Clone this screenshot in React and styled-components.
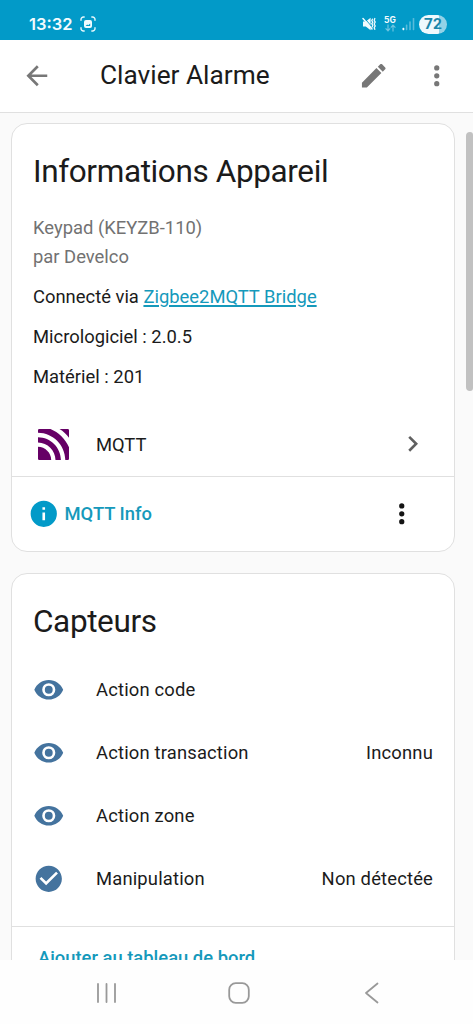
import React from "react";
import styled, { createGlobalStyle } from "styled-components";

const GlobalStyle = createGlobalStyle`
  * { box-sizing: border-box; }
  body { margin: 0; background: #fafafa; }
`;

const Screen = styled.div`
  display: flex;
  flex-direction: column;
  width: 473px;
  height: 1024px;
  overflow: hidden;
  background: #fafafa;
  color: #1b1b1b;
  font-family: Roboto, "Liberation Sans", sans-serif;
  font-size: 18.4px;
`;

const StatusBar = styled.header`
  display: flex;
  flex: none;
  align-items: center;
  height: 40px;
  padding: 8px 26px 0 29px;
  background: #029ac8;
  color: #f2fbfe;
`;

const Clock = styled.span`
  width: 51px;
  font-family: Inter, sans-serif;
  font-size: 16.5px;
  font-weight: 600;
  line-height: 20px;
`;

const StatusIcons = styled.div`
  display: flex;
  align-items: center;
  margin-left: auto;
`;

const Network = styled.div`
  display: flex;
  flex-direction: column;
  align-items: center;
  width: 12px;
  margin: 0 6px 0 8px;
  font-family: Inter, sans-serif;
  font-size: 8.5px;
  font-weight: 700;
  line-height: 8px;
`;

const Battery = styled.span`
  width: 28px;
  height: 19px;
  margin-left: 4px;
  border-radius: 10px;
  background: linear-gradient(90deg, #eef9fd 72%, #93d2e7 72%);
  color: #1a87ab;
  font-family: Roboto, sans-serif;
  font-size: 15.5px;
  font-weight: 700;
  line-height: 19px;
  text-align: center;
`;

const AppBar = styled.div`
  display: flex;
  flex: none;
  align-items: center;
  height: 73px;
  padding: 0 21px 0 21px;
  border-bottom: 1px solid #e0e0e0;
  background: #fff;
`;

const AppTitle = styled.h1`
  flex: 1;
  margin: -2px 0 0 47.5px;
  font-size: 26.25px;
  font-weight: 400;
  line-height: 32px;
`;

const Content = styled.main`
  display: flex;
  flex: 1;
  min-height: 0;
  justify-content: space-between;
  overflow: hidden;
`;

const Cards = styled.div`
  display: flex;
  flex-direction: column;
  gap: 21px;
  width: 444px;
  margin: 10px 0 0 11px;
`;

const ScrollThumb = styled.div`
  width: 7px;
  height: 259px;
  margin-top: 19px;
  border-radius: 4px 3px 3px 4px;
  background: #c1c1c1;
`;

const Card = styled.section`
  flex: none;
  height: ${(p) => p.$height}px;
  border: 1.4px solid #e0e0e0;
  border-radius: 16px;
  background: #fff;
`;

const CardTitle = styled.h2`
  margin: 0;
  padding: 28px 21px 0;
  font-size: 31.5px;
  font-weight: 400;
  line-height: 40px;
  letter-spacing: -0.38px;
`;

const Model = styled.div`
  margin: 21px 21px 0;
  color: #727272;
  line-height: 29px;
`;

const Detail = styled.div`
  margin: 11px 21px 0;
  line-height: 29px;
`;

const Link = styled.a`
  color: #1599bb;
  text-decoration: underline;
  text-decoration-thickness: 1.5px;
  text-underline-offset: 2px;
`;

const Row = styled.div`
  display: flex;
  align-items: center;
  height: 63px;
  padding: 0 21px;
  letter-spacing: 0.17px;
`;

const RowIcon = styled.span`
  display: flex;
  width: 63px;
`;

const RowLabel = styled.span`
  flex: 1;
`;

const IntegrationRow = styled(Row)`
  height: 64px;
  margin-top: 21px;
  padding: 0 26px 0 26px;
  letter-spacing: 0;
`;

const IntegrationIcon = styled(RowIcon)`
  width: 58px;
  padding-top: 1px;
`;

const Actions = styled.div`
  display: flex;
  align-items: center;
  height: 74px;
  padding: 0 37px 0 15.5px;
  border-top: 1.4px solid #e0e0e0;
`;

const ActionLabel = styled.span`
  flex: 1;
  margin-left: 5.5px;
  color: #1599bb;
  font-weight: 500;
`;

const Rows = styled.div`
  margin-top: 16px;
`;

const AddLink = styled.div`
  margin-top: 16px;
  padding: 17px 26px 0 26px;
  border-top: 1.4px solid #e0e0e0;
  color: #1599bb;
  font-weight: 500;
  line-height: 28px;
`;

const NavBar = styled.nav`
  display: flex;
  flex: none;
  align-items: center;
  justify-content: space-between;
  height: 64px;
  padding: 1px 93px 0 95px;
  background: #fefefe;
`;

const PATHS = {
  back: "M20,11V13H8L13.5,18.5L12.08,19.92L4.16,12L12.08,4.08L13.5,5.5L8,11H20Z",
  pencil:
    "M20.71,7.04C21.1,6.65 21.1,6 20.71,5.63L18.37,3.29C18,2.9 17.35,2.9 16.96,3.29L15.12,5.12L18.87,8.87M3,17.25V21H6.75L17.81,9.93L14.06,6.18L3,17.25Z",
  dots: "M12,16A2,2 0 0,1 14,18A2,2 0 0,1 12,20A2,2 0 0,1 10,18A2,2 0 0,1 12,16M12,10A2,2 0 0,1 14,12A2,2 0 0,1 12,14A2,2 0 0,1 10,12A2,2 0 0,1 12,10M12,4A2,2 0 0,1 14,6A2,2 0 0,1 12,8A2,2 0 0,1 10,6A2,2 0 0,1 12,4Z",
  chevron: "M8.59,16.58L13.17,12L8.59,7.41L10,6L16,12L10,18L8.59,16.58Z",
  info: "M13,9H11V7H13M13,17H11V11H13M12,2A10,10 0 0,0 2,12A10,10 0 0,0 12,22A10,10 0 0,0 22,12A10,10 0 0,0 12,2Z",
  eye: "M12,9A3,3 0 0,0 9,12A3,3 0 0,0 12,15A3,3 0 0,0 15,12A3,3 0 0,0 12,9M12,17A5,5 0 0,1 7,12A5,5 0 0,1 12,7A5,5 0 0,1 17,12A5,5 0 0,1 12,17M12,4.5C7,4.5 2.73,7.61 1,12C2.73,16.39 7,19.5 12,19.5C17,19.5 21.27,16.39 23,12C21.27,7.61 17,4.5 12,4.5Z",
  check:
    "M12 2C6.5 2 2 6.5 2 12S6.5 22 12 22 22 17.5 22 12 17.5 2 12 2M10 17L5 12L6.41 10.59L10 14.17L17.59 6.58L19 8L10 17Z",
};

const IconSvg = styled.svg`
  display: block;
  flex: none;
  fill: ${(p) => p.$color};
`;

const Icon = ({ name, color, size = 31.5 }) => (
  <IconSvg $color={color} width={size} height={size} viewBox="0 0 24 24">
    <path d={PATHS[name]} />
  </IconSvg>
);

const EditIcon = styled.span`
  margin-right: 31.5px;
`;

const ScreenshotIcon = () => (
  <svg width="16" height="16" viewBox="0 0 16 16" fill="none" stroke="#e6f7fc" strokeWidth="1.4" strokeLinecap="round">
    <path d="M1 4.2V3.4A2.4 2.4 0 0 1 3.4 1H4.2M11.8 1H12.6A2.4 2.4 0 0 1 15 3.4V4.2M15 11.8V12.6A2.4 2.4 0 0 1 12.6 15H11.8M4.2 15H3.4A2.4 2.4 0 0 1 1 12.6V11.8" />
    <rect x="4" y="4" width="8" height="8" rx="2" fill="#f2fbfe" stroke="none" />
    <path d="M5.6 10L7.2 8.4L8.2 9.2L10.2 7.4V10Z" fill="#029ac8" stroke="none" />
  </svg>
);

const MuteIcon = () => (
  <svg width="14" height="14" viewBox="0 0 14 14" fill="none" stroke="#f2fbfe" strokeLinecap="round">
    <path d="M1 4.5H3.8L8.6 .8V13.2L3.8 9.5H1Z" fill="#f2fbfe" stroke="none" />
    <path d="M2.2 1L11 11" stroke="#029ac8" strokeWidth="1" />
    <path d="M1 1.6L10 12" strokeWidth="1.5" />
    <path d="M10.4 2.2L9.8 3.7L10.8 5.2L9.8 6.8L10.8 8.4L10.1 10M12.8 1.5L12.2 3.3L13.2 5.1L12.2 7L13.2 8.9L12.2 10.7L12.8 12.3" strokeWidth="1.3" />
  </svg>
);

const DataArrows = () => (
  <svg width="11" height="8" viewBox="0 0 11 8" fill="none" stroke="#6cc4e0" strokeWidth="1.2">
    <path d="M3 .5V6.8M.6 4.4L3 6.8L5.2 4.4M8 7.5V1.2M5.8 3.6L8 1.2L10.4 3.6" />
  </svg>
);

const SignalIcon = () => (
  <svg width="13" height="14" viewBox="0 0 13 14" fill="#58bbdb">
    <rect x="0.5" y="10.8" width="1.8" height="2.4" rx=".6" fill="#f2fbfe" />
    <rect x="3.8" y="7.5" width="1.6" height="5.7" rx=".6" />
    <rect x="7.2" y="4.3" width="1.6" height="8.9" rx=".6" />
    <rect x="10.7" y="1" width="1.6" height="12.2" rx=".6" />
  </svg>
);

const MqttLogo = () => (
  <svg width="31" height="31" viewBox="0 0 31 31" fill="#660066">
    <path d="M0 17.8C7.2 17.9 13 23.7 13.2 31H1.2Q0 31 0 29.8Z" />
    <path d="M0 8.3C12.6 8.4 22.7 18.5 22.9 31H17.5C17.3 21.5 9.6 13.8 0 13.6Z" />
    <path d="M0 1.2Q0 0 1.2 0H12.5C20.5 3.3 27.5 10 31 18.3V29.8Q31 31 29.8 31H27.3C27.1 16 15 3.9 0 3.7Z" />
    <path d="M21.5 0H29.8Q31 0 31 1.2V8.8C28.5 5.3 25.3 2.3 21.5 0Z" />
  </svg>
);

const RecentsIcon = () => (
  <svg width="22" height="22" viewBox="0 0 22 22" stroke="#999" strokeWidth="1.8" strokeLinecap="round">
    <path d="M3 2V20M11.5 2V20M20 2V20" />
  </svg>
);

const HomeButton = styled.span`
  display: flex;
  margin-right: 4px;
`;

const HomeIcon = () => (
  <svg width="22" height="22" viewBox="0 0 22 22" fill="none" stroke="#999" strokeWidth="1.8">
    <rect x="1.2" y="1.2" width="19.6" height="19.6" rx="6.5" />
  </svg>
);

const NavBackIcon = () => (
  <svg width="16" height="22" viewBox="0 0 16 22" fill="none" stroke="#999" strokeWidth="1.8" strokeLinecap="round" strokeLinejoin="round">
    <path d="M13.5 1.5L2 11L13.5 20.5" />
  </svg>
);

const SENSORS = [
  { icon: "eye", label: "Action code", value: "" },
  { icon: "eye", label: "Action transaction", value: "Inconnu" },
  { icon: "eye", label: "Action zone", value: "" },
  { icon: "check", label: "Manipulation", value: "Non détectée" },
];

export default function App() {
  return (
    <Screen>
      <GlobalStyle />
      <StatusBar>
        <Clock>13:32</Clock>
        <ScreenshotIcon />
        <StatusIcons>
          <MuteIcon />
          <Network>
            5G
            <DataArrows />
          </Network>
          <SignalIcon />
          <Battery>72</Battery>
        </StatusIcons>
      </StatusBar>
      <AppBar>
        <Icon name="back" color="#777" />
        <AppTitle>Clavier Alarme</AppTitle>
        <EditIcon>
          <Icon name="pencil" color="#777" />
        </EditIcon>
        <Icon name="dots" color="#777" />
      </AppBar>
      <Content>
        <Cards>
          <Card $height={429}>
            <CardTitle>Informations Appareil</CardTitle>
            <Model>
              Keypad (KEYZB-110)
              <br />
              par Develco
            </Model>
            <Detail>
              Connecté via <Link>Zigbee2MQTT Bridge</Link>
            </Detail>
            <Detail>Micrologiciel : 2.0.5</Detail>
            <Detail>Matériel : 201</Detail>
            <IntegrationRow>
              <IntegrationIcon>
                <MqttLogo />
              </IntegrationIcon>
              <RowLabel>MQTT</RowLabel>
              <Icon name="chevron" color="#606060" />
            </IntegrationRow>
            <Actions>
              <Icon name="info" color="#029ac8" />
              <ActionLabel>MQTT Info</ActionLabel>
              <Icon name="dots" color="#141414" />
            </Actions>
          </Card>
          <Card $height={480}>
            <CardTitle>Capteurs</CardTitle>
            <Rows>
              {SENSORS.map((s) => (
                <Row key={s.label}>
                  <RowIcon>
                    <Icon name={s.icon} color="#44739e" />
                  </RowIcon>
                  <RowLabel>{s.label}</RowLabel>
                  <span>{s.value}</span>
                </Row>
              ))}
            </Rows>
            <AddLink>Ajouter au tableau de bord</AddLink>
          </Card>
        </Cards>
        <ScrollThumb />
      </Content>
      <NavBar>
        <RecentsIcon />
        <HomeButton>
          <HomeIcon />
        </HomeButton>
        <NavBackIcon />
      </NavBar>
    </Screen>
  );
}
